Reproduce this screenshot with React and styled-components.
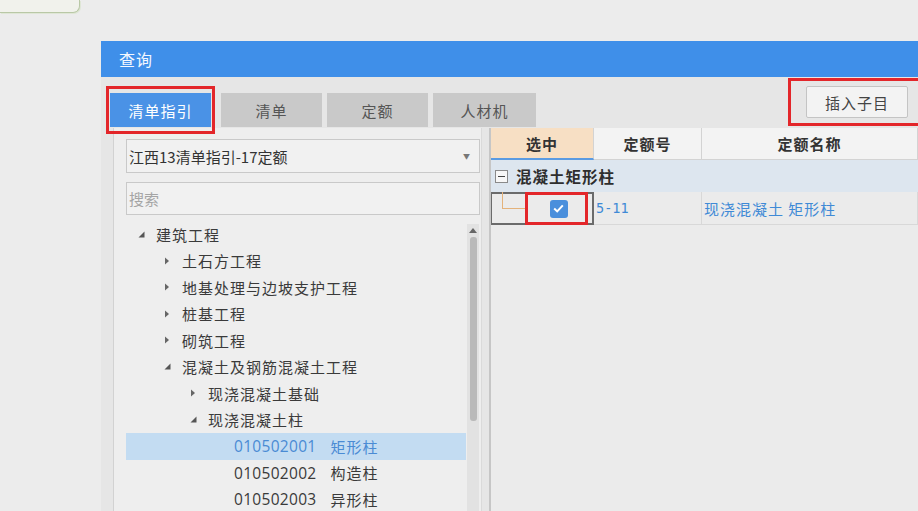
import React from "react";
import styled, { createGlobalStyle } from "styled-components";

const GlobalStyle = createGlobalStyle`
  *, *::before, *::after { box-sizing: border-box; }
  html, body { margin: 0; padding: 0; }
  body {
    background: #ececec;
    font-family: "Noto Sans CJK SC", "Noto Sans", sans-serif;
    overflow: hidden;
  }
`;

const Page = styled.div`
  width: 918px;
  height: 511px;
  overflow: hidden;
  background: #ececec;
  display: flex;
  flex-direction: column;
`;

const TopCard = styled.div`
  width: 80px;
  height: 13px;
  flex: none;
  background: #f1f2ec;
  border: 1px solid #b9c8a6;
  border-top: none;
  border-left: none;
  border-bottom-right-radius: 7px;
  box-shadow: 1px 1px 0 #dfe6d6;
`;

const Dialog = styled.div`
  margin: 28px 0 0 101px;
  flex: 1;
  display: flex;
  flex-direction: column;
  min-height: 0;
`;

const TitleBar = styled.div`
  height: 36px;
  flex: none;
  background: #3f8fe9;
  color: #f4f8ff;
  font-size: 16px;
  letter-spacing: 1px;
  display: flex;
  align-items: center;
  padding-left: 18px;
`;

const Body = styled.div`
  flex: 1;
  background: #e6e6e6;
  display: flex;
  flex-direction: column;
  min-height: 0;
`;

const TabBar = styled.div`
  height: 51px;
  flex: none;
  display: flex;
  align-items: flex-end;
  padding-left: 9px;
`;

const Tabs = styled.div`
  display: flex;
  gap: 5px;
  margin-bottom: 1px;
`;

const Tab = styled.div`
  position: relative;
  width: ${(p) => p.$w || 101}px;
  height: 34px;
  display: flex;
  align-items: center;
  justify-content: center;
  font-size: 15px;
  letter-spacing: 1px;
  background: ${(p) => (p.$active ? "#4a92e6" : "#c9c9c9")};
  color: ${(p) => (p.$active ? "#ffffff" : "#555555")};
  ${(p) =>
    p.$active &&
    `
    margin-right: 5px;
    &::after {
      content: "";
      position: absolute;
      left: -4px;
      right: -4px;
      top: -7px;
      bottom: -7px;
      border: 3px solid #e3262a;
    }
  `}
`;

const RedFrame = styled.div`
  margin-left: auto;
  align-self: flex-start;
  margin-top: 1px;
  border: 3px solid #e3262a;
  border-right: none;
  padding: 5px 10px 5px 15px;
`;

const InsertButton = styled.button`
  width: 102px;
  height: 32px;
  border: 1px solid #c4c4c4;
  border-radius: 2px;
  background: #f3f3f3;
  color: #444;
  font-family: "Noto Sans CJK SC", sans-serif;
  font-size: 15px;
  letter-spacing: 1px;
  padding: 0;
`;

const Content = styled.div`
  flex: 1;
  display: flex;
  min-height: 0;
  padding-left: 12px;
  gap: 7px;
`;

const LeftPanel = styled.div`
  width: 369px;
  flex: none;
  background: #eeeeee;
  border-left: 1px solid #d2d2d2;
  border-right: 1px solid #dadada;
  padding: 11px 0 0 12px;
  display: flex;
  flex-direction: column;
  gap: 9px;
`;

const Field = styled.div`
  width: 354px;
  height: ${(p) => p.$h}px;
  flex: none;
  border: 1px solid #c9c9c9;
  background: #f1f1f1;
  display: flex;
  align-items: center;
  padding: 0 9px 0 2px;
  font-size: 15px;
  color: ${(p) => (p.$placeholder ? "#a5a5a5" : "#333")};
`;

const Caret = styled.span`
  margin-left: auto;
  font-size: 7px;
  color: #777;
`;

const TreeArea = styled.div`
  display: flex;
  flex: 1;
  min-height: 0;
`;

const TreeList = styled.div`
  width: 340px;
  margin-top: -3px;
`;

const TreeRow = styled.div`
  height: 26.5px;
  display: flex;
  align-items: center;
  padding-left: ${(p) => 12 + p.$level * 26}px;
  background: ${(p) => (p.$selected ? "#c3dcf2" : "transparent")};
  color: ${(p) => (p.$selected ? "#4a8bd4" : "#3a3a3a")};
  font-size: 15px;
  letter-spacing: 1px;
  white-space: nowrap;
`;

const Arrow = styled.span`
  width: 18px;
  flex: none;
  display: flex;
  align-items: center;
`;

const Code = styled.span`
  font-family: "Open Sans", "Noto Sans", sans-serif;
  font-size: 15.5px;
  letter-spacing: 0.3px;
  margin-right: 14px;
`;

const Scrollbar = styled.div`
  width: 12px;
  margin-left: 1px;
  background: #e2e2e2;
  display: flex;
  flex-direction: column;
  align-items: center;
  padding-top: 4px;
`;

const Thumb = styled.div`
  width: 7px;
  height: 184px;
  margin-top: 4px;
  border-radius: 3px;
  background: #b9b9b9;
`;

const RightPanel = styled.div`
  flex: 1;
  border-left: 2px solid #c6c6c6;
  background: #ebebeb;
  display: flex;
  flex-direction: column;
`;

const GridRow = styled.div`
  display: grid;
  grid-template-columns: 103px 108px 1fr;
  height: ${(p) => p.$h}px;
  flex: none;
`;

const HeadCell = styled.div`
  display: flex;
  align-items: center;
  justify-content: center;
  font-size: 15px;
  font-weight: 600;
  letter-spacing: 1px;
  color: #333;
  background: ${(p) => (p.$hl ? "#f7dfc4" : "#f3f3f3")};
  border-right: 1px solid #d3d3d3;
  border-bottom: ${(p) => (p.$hl ? "2px solid #5b9be2" : "1px solid #d3d3d3")};
`;

const GroupRow = styled.div`
  height: 32px;
  flex: none;
  background: #dde6ef;
  display: flex;
  align-items: center;
  padding-left: 4px;
  gap: 8px;
  font-size: 15.5px;
  font-weight: 700;
  letter-spacing: 1px;
  color: #2e2e2e;
`;

const MinusBox = styled.span`
  width: 13px;
  height: 13px;
  border: 1px solid #8a8a8a;
  background: #f7f7f7;
  display: flex;
  align-items: center;
  justify-content: center;
  &::before {
    content: "";
    width: 7px;
    height: 1px;
    background: #444;
  }
`;

const DataCell = styled.div`
  display: flex;
  align-items: center;
  padding-left: 2px;
  border-right: 1px solid #d8d8d8;
  border-bottom: 1px solid #d8d8d8;
  color: #3f8ad6;
  font-size: 15px;
  letter-spacing: 1px;
`;

const FocusCell = styled.div`
  position: relative;
  border: 2px solid #6b6b6b;
  border-left-width: 1px;
`;

const Connector = styled.span`
  position: absolute;
  left: 10px;
  top: -2px;
  width: 24px;
  height: 17px;
  border-left: 1px solid #e4b27a;
  border-bottom: 1px solid #e4b27a;
`;

const CheckFrame = styled.div`
  position: absolute;
  left: 33px;
  top: -2px;
  width: 63px;
  height: 33px;
  border: 3px solid #e3262a;
  display: flex;
  align-items: center;
  justify-content: center;
  padding-left: 4px;
`;

const Checkbox = styled.span`
  width: 18px;
  height: 18px;
  border-radius: 3px;
  background: #4a8fdc;
  display: flex;
  align-items: center;
  justify-content: center;
`;

const NumText = styled.span`
  font-family: "DejaVu Sans Mono", "Liberation Mono", monospace;
  font-size: 13.5px;
  letter-spacing: 0;
  color: #3f8ad6;
`;

const Collapsed = () => (
  <svg width="6" height="8" viewBox="0 0 6 8">
    <path d="M1 0.5 L5 4 L1 7.5 Z" fill="#666" />
  </svg>
);

const Expanded = () => (
  <svg width="7" height="7" viewBox="0 0 7 7">
    <path d="M6.5 0.5 L6.5 6.5 L0.5 6.5 Z" fill="#555" />
  </svg>
);

const tree = [
  { level: 0, open: true, text: "建筑工程" },
  { level: 1, open: false, text: "土石方工程" },
  { level: 1, open: false, text: "地基处理与边坡支护工程" },
  { level: 1, open: false, text: "桩基工程" },
  { level: 1, open: false, text: "砌筑工程" },
  { level: 1, open: true, text: "混凝土及钢筋混凝土工程" },
  { level: 2, open: false, text: "现浇混凝土基础" },
  { level: 2, open: true, text: "现浇混凝土柱" },
  { level: 3, code: "010502001", text: "矩形柱", selected: true },
  { level: 3, code: "010502002", text: "构造柱" },
  { level: 3, code: "010502003", text: "异形柱" },
];

export default function App() {
  return (
    <>
      <GlobalStyle />
      <Page>
        <TopCard />
        <Dialog>
          <TitleBar>查询</TitleBar>
          <Body>
            <TabBar>
              <Tabs>
                <Tab $active $w={101}>清单指引</Tab>
                <Tab $w={101}>清单</Tab>
                <Tab $w={101}>定额</Tab>
                <Tab $w={103}>人材机</Tab>
              </Tabs>
              <RedFrame>
                <InsertButton>插入子目</InsertButton>
              </RedFrame>
            </TabBar>
            <Content>
              <LeftPanel>
                <Field $h={34}>
                  江西13清单指引-17定额
                  <Caret>▼</Caret>
                </Field>
                <Field $h={33} $placeholder>
                  搜索
                </Field>
                <TreeArea>
                  <TreeList>
                    {tree.map((n, i) => (
                      <TreeRow key={i} $level={n.level} $selected={n.selected}>
                        {n.code ? (
                          <>
                            <Arrow />
                            <Code>{n.code}</Code>
                            {n.text}
                          </>
                        ) : (
                          <>
                            <Arrow>{n.open ? <Expanded /> : <Collapsed />}</Arrow>
                            {n.text}
                          </>
                        )}
                      </TreeRow>
                    ))}
                  </TreeList>
                  <Scrollbar>
                    <svg width="8" height="5" viewBox="0 0 8 5">
                      <path d="M0 5 L4 0 L8 5 Z" fill="#666" />
                    </svg>
                    <Thumb />
                  </Scrollbar>
                </TreeArea>
              </LeftPanel>
              <RightPanel>
                <GridRow $h={32}>
                  <HeadCell $hl>选中</HeadCell>
                  <HeadCell>定额号</HeadCell>
                  <HeadCell>定额名称</HeadCell>
                </GridRow>
                <GroupRow>
                  <MinusBox />
                  混凝土矩形柱
                </GroupRow>
                <GridRow $h={33}>
                  <FocusCell>
                    <Connector />
                    <CheckFrame>
                      <Checkbox>
                        <svg width="11" height="9" viewBox="0 0 11 9">
                          <path
                            d="M1.2 4.6 L4.2 7.4 L9.8 1.4"
                            fill="none"
                            stroke="#fff"
                            strokeWidth="2"
                          />
                        </svg>
                      </Checkbox>
                    </CheckFrame>
                  </FocusCell>
                  <DataCell>
                    <NumText>5-11</NumText>
                  </DataCell>
                  <DataCell>现浇混凝土 矩形柱</DataCell>
                </GridRow>
              </RightPanel>
            </Content>
          </Body>
        </Dialog>
      </Page>
    </>
  );
}
